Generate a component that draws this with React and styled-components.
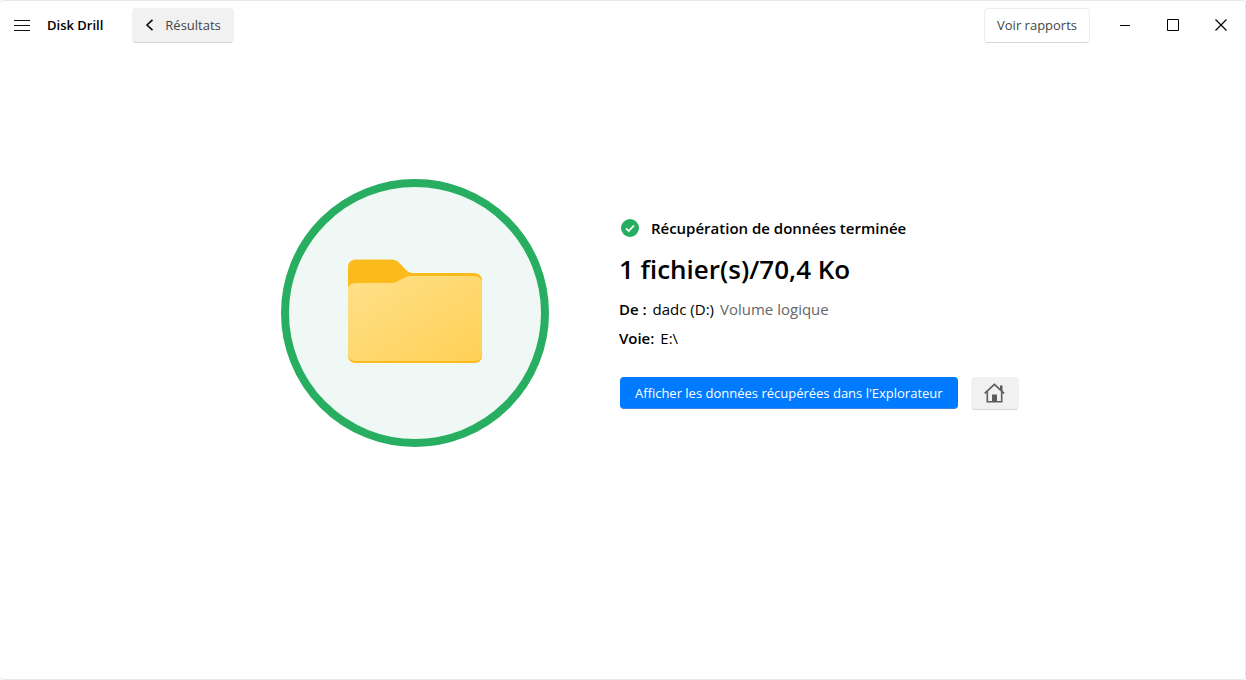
import React, { useState } from 'react'
import styled, { createGlobalStyle } from 'styled-components'

const GlobalStyle = createGlobalStyle`
  * {
    margin: 0;
    padding: 0;
    box-sizing: border-box;
  }
  body {
    background: #fff;
    color: #000;
    font-family: "Segoe UI", "Open Sans", "Noto Sans", sans-serif;
    font-size: 13px;
  }
  button {
    font-family: inherit;
    cursor: pointer;
  }
`

const Window = styled.div`
  display: flex;
  flex-direction: column;
  min-height: 100vh;
  border: 1px solid #e8e8e8;
  border-left: none;
  border-radius: 4px;
`

const TitleBar = styled.header`
  display: flex;
  align-items: center;
  justify-content: space-between;
  height: 48px;
`

const Group = styled.div`
  display: flex;
  align-items: center;
`

const WindowControls = styled(Group)`
  margin-left: 11px;
`

const IconButton = styled.button`
  display: flex;
  align-items: center;
  justify-content: center;
  width: ${(props) => props.$width};
  height: 48px;
  border: none;
  background: none;
`

const AppName = styled.h1`
  margin: 0 29px 0 3px;
  font-size: 13px;
  font-weight: 600;
  line-height: 20px;
`

const Button = styled.button`
  display: flex;
  align-items: center;
  justify-content: center;
  gap: 11px;
  height: 35px;
  padding: 0 12px;
  border: 1px solid ${(props) => (props.$outline ? '#ededed' : '#f1f1f1')};
  border-bottom-color: #d6d6d6;
  border-radius: 4px;
  background: ${(props) => (props.$outline ? '#fff' : '#f1f1f1')};
  color: #444;
  font-size: 13px;
  line-height: 20px;
  white-space: nowrap;
`

const PrimaryButton = styled(Button)`
  height: 32px;
  padding: 0 14px;
  border-color: #007aff;
  border-bottom-color: #3b86d8;
  background: #007aff;
  color: #fff;
`

const HomeButton = styled(Button)`
  width: 48px;
  height: 33px;
  padding: 0;
`

const Main = styled.main`
  display: grid;
  grid-template-columns: 44% 1fr;
  column-gap: 70px;
  align-items: center;
  padding: 130px 0 0 2px;
`

const Badge = styled.div`
  display: flex;
  align-items: center;
  justify-content: center;
  justify-self: end;
  width: 268px;
  height: 268px;
  padding-bottom: 4px;
  border: 8px solid #28ae60;
  border-radius: 50%;
  background: #eff8f4;
`

const Details = styled.section`
  display: flex;
  flex-direction: column;
  align-items: flex-start;
`

const Status = styled.p`
  display: flex;
  align-items: center;
  gap: 12px;
  padding-left: 2px;
  font-size: 15px;
  font-weight: 600;
  line-height: 22px;
`

const Total = styled.h2`
  margin: 10px 0 6px;
  font-size: 26px;
  font-weight: 600;
  line-height: 40px;
`

const Info = styled.p`
  display: flex;
  gap: 6px;
  font-size: 15px;
  line-height: 29px;

  strong {
    font-weight: 600;
  }
`

const Muted = styled.span`
  color: #666;
`

const Actions = styled.div`
  display: flex;
  align-items: center;
  gap: 13px;
  margin-top: 24px;
  padding-left: 1px;
`

const MenuIcon = () => (
  <svg width="16" height="12" stroke="#111" aria-hidden="true">
    <path d="M0 1.5h16M0 6.5h16M0 11.5h16" />
  </svg>
)

const BackIcon = () => (
  <svg width="9" height="12" fill="none" stroke="#111" strokeWidth="1.7" aria-hidden="true">
    <path d="M7.5 .8L2 6l5.5 5.2" />
  </svg>
)

const MinimizeIcon = () => (
  <svg width="10" height="12" stroke="#000" aria-hidden="true">
    <path d="M0 6.5h10" />
  </svg>
)

const MaximizeIcon = () => (
  <svg width="12" height="12" fill="none" stroke="#000" aria-hidden="true">
    <path d="M.5 .5h11v11h-11z" />
  </svg>
)

const CloseIcon = () => (
  <svg width="12" height="12" fill="none" stroke="#000" strokeWidth="1.2" aria-hidden="true">
    <path d="M.5 .5l11 11M11.5 .5l-11 11" />
  </svg>
)

const CheckIcon = () => (
  <svg width="18" height="18" fill="none" aria-hidden="true">
    <circle cx="9" cy="9" r="9" fill="#28ae60" />
    <path d="M5 9.3l2.7 2.7L13 6.5" stroke="#fff" strokeWidth="1.8" />
  </svg>
)

const HomeIcon = () => (
  <svg width="21" height="20" fill="none" stroke="#5c5c5c" strokeWidth="1.6" aria-hidden="true">
    <path d="M.7 10.3L10.4 1.3l9.7 9" />
    <path d="M3.3 8.3v10.4h14.4V8.3" />
    <path d="M16 2.5h2.5v6L16 6z" fill="#5c5c5c" stroke="none" />
    <path d="M8 11.5h5v7H8z" fill="#5c5c5c" stroke="none" />
  </svg>
)

const FolderIcon = () => (
  <svg width="134" height="104" viewBox="0 0 134 104" aria-hidden="true">
    <defs>
      <linearGradient id="front" x1="0" y1="0" x2="1" y2="1">
        <stop offset="0" stopColor="#ffe08a" />
        <stop offset="1" stopColor="#ffd055" />
      </linearGradient>
    </defs>
    <path
      fill="#fcbb1c"
      d="M8 .5H43Q48 .5 51 3.500L58 11Q61 14 64 14H125Q134 14 134 22V96Q134 104 126 104H8Q0 104 0 96V8.500Q0 .5 8 .5z"
    />
    <path
      fill="url(#front)"
      d="M8 24H43Q46 24 49 22.500L57 18.500Q60 17 63 17H125Q134 17 134 25V94Q134 102 126 102H8Q0 102 0 94V31Q0 24 8 24z"
    />
  </svg>
)

const App = () => {
  const [maximized, setMaximized] = useState(false)

  return (
    <Window>
      <GlobalStyle />
      <TitleBar>
        <Group>
          <IconButton $width="44px" aria-label="Menu">
            <MenuIcon />
          </IconButton>
          <AppName>Disk Drill</AppName>
          <Button>
            <BackIcon />
            Résultats
          </Button>
        </Group>
        <Group>
          <Button $outline>Voir rapports</Button>
          <WindowControls>
            <IconButton $width="48px" aria-label="Réduire">
              <MinimizeIcon />
            </IconButton>
            <IconButton
              $width="48px"
              aria-label="Agrandir"
              aria-pressed={maximized}
              onClick={() => setMaximized(!maximized)}
            >
              <MaximizeIcon />
            </IconButton>
            <IconButton $width="48px" aria-label="Fermer">
              <CloseIcon />
            </IconButton>
          </WindowControls>
        </Group>
      </TitleBar>
      <Main>
        <Badge>
          <FolderIcon />
        </Badge>
        <Details>
          <Status>
            <CheckIcon />
            Récupération de données terminée
          </Status>
          <Total>1 fichier(s)/70,4 Ko</Total>
          <Info>
            <strong>De :</strong>
            <span>dadc (D:)</span>
            <Muted>Volume logique</Muted>
          </Info>
          <Info>
            <strong>Voie:</strong>
            <span>E:\</span>
          </Info>
          <Actions>
            <PrimaryButton>Afficher les données récupérées dans l'Explorateur</PrimaryButton>
            <HomeButton aria-label="Accueil">
              <HomeIcon />
            </HomeButton>
          </Actions>
        </Details>
      </Main>
    </Window>
  )
}

export default App
